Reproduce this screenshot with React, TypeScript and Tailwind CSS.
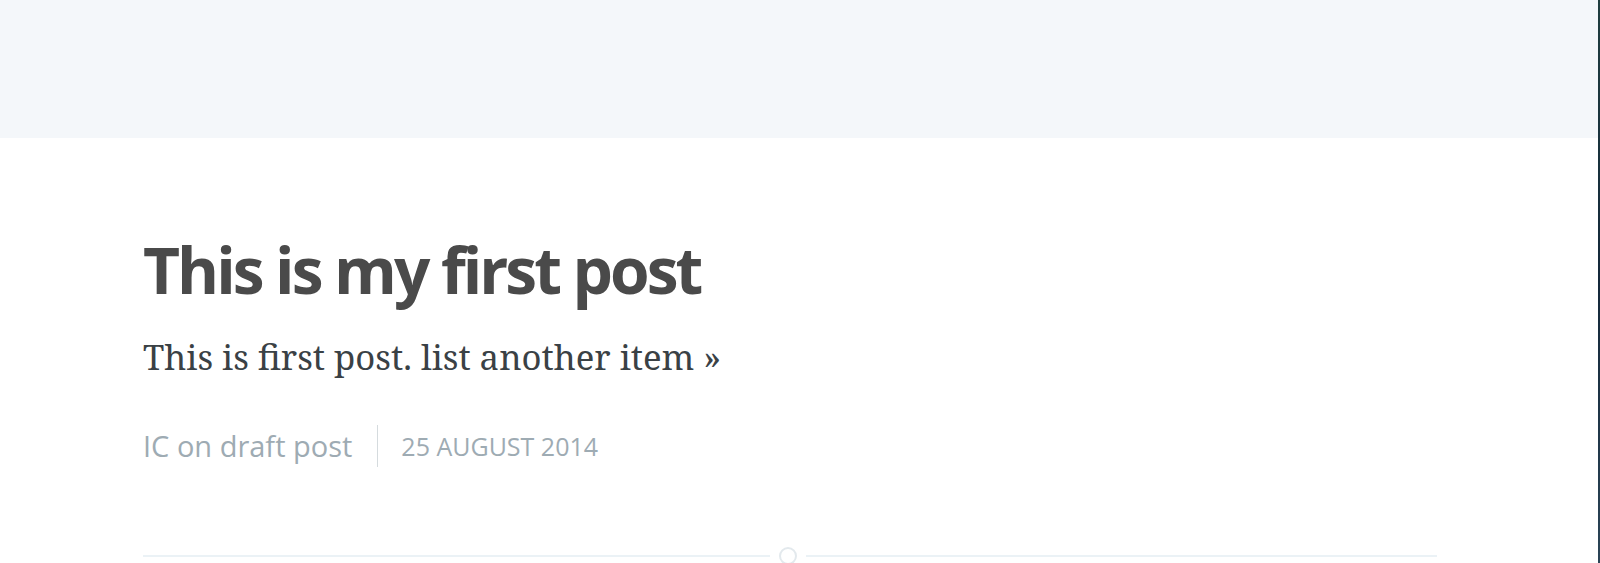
export default function App() {
  return (
    <div className="flex h-[563px] w-[1600px] overflow-hidden bg-white">
      <div className="flex-1 flex flex-col">
        {/* top bar */}
        <header className="h-[138px] shrink-0 bg-[#f4f7fa]"></header>

        <main className="ml-[143px] w-[1294px] pt-[100px]">
          <h2 className="font-['Open_Sans',sans-serif] text-[64px] font-bold leading-[64px] tracking-[-3px] text-[#4a4a4a]">
            This is my first post
          </h2>
          <p className="mt-[35px] font-['Noto_Serif','Liberation_Serif',serif] text-[34.7px] leading-[40px] text-[#3a4145]">
            This is first post. list another item »
          </p>
          <div className="mt-[48px] flex items-center font-['Open_Sans',sans-serif] text-[#9eabb3]">
            <span className="text-[29px] leading-[42px]">IC on draft post</span>
            <span className="ml-[25px] mr-[23px] h-[42px] w-px bg-[#d5dbde]"></span>
            <span className="text-[25px] uppercase leading-[42px]">25 August 2014</span>
          </div>

          {/* divider with circle */}
          <div className="relative mt-[88px] h-[2px] bg-[#ebf2f6]">
            <div className="absolute left-[627px] top-[-10px] h-[20px] w-[36px] bg-white"></div>
            <div className="absolute left-[636px] top-[-8px] h-[18px] w-[18px] rounded-full border-2 border-[#e3e9ed] bg-white"></div>
          </div>
        </main>
      </div>
      <div className="h-full w-[2px] shrink-0 bg-gradient-to-b from-[#1f3d3f] via-[#14283a] to-[#2b4456]"></div>
    </div>
  );
}
